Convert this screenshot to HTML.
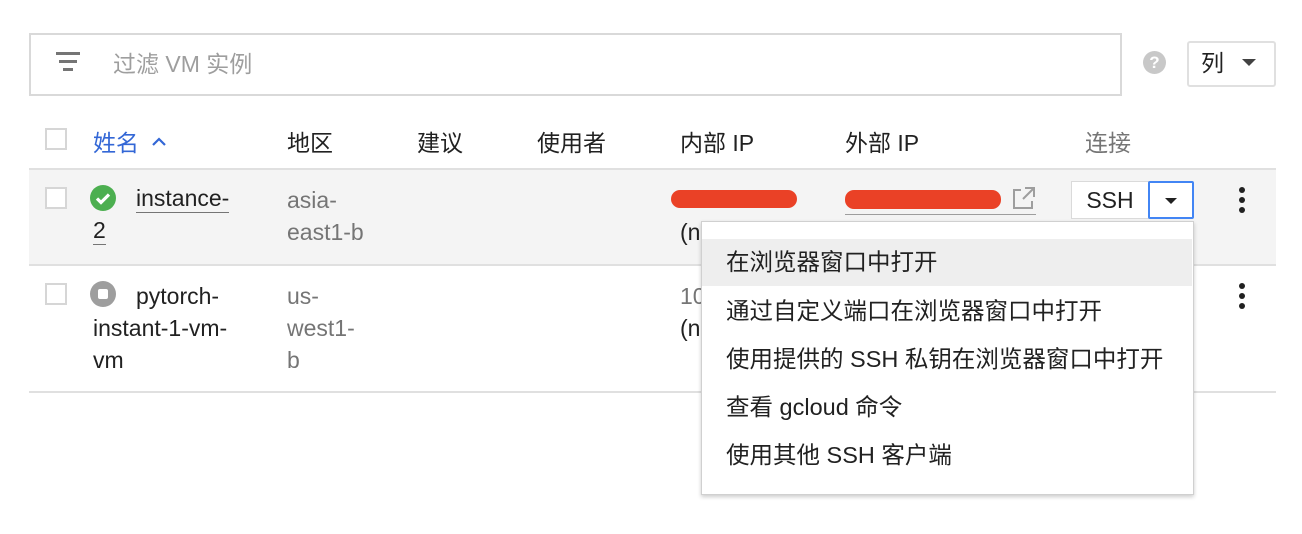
<!DOCTYPE html>
<html><head><meta charset="utf-8"><style>
*{margin:0;padding:0;box-sizing:border-box}
body{width:1302px;height:534px;background:#fff;position:relative;overflow:hidden;font-family:"Liberation Sans","Noto Sans CJK SC",sans-serif;font-size:23px;color:#212121}
.a{position:absolute;white-space:nowrap;line-height:32px}
.cb{position:absolute;width:22px;height:22px;border:2px solid #d6d6d6;background:#fff}
.g{color:#757575}
.line{position:absolute;left:29px;width:1247px;height:2px;background:#e0e0e0}
.mi{position:absolute;left:0;width:490px;height:47px;line-height:47px;padding-left:24px;font-size:23.5px}
</style></head><body>
<div style="position:absolute;left:29px;top:33px;width:1093px;height:63px;border:2px solid #d9d9d9"></div>
<div style="position:absolute;left:56px;top:52px;width:24px;height:3px;background:#757575"></div>
<div style="position:absolute;left:59px;top:60px;width:18px;height:3px;background:#757575"></div>
<div style="position:absolute;left:63px;top:68px;width:10px;height:3px;background:#757575"></div>
<div class="a" style="left:113px;top:48px;color:#9e9e9e">过滤 VM 实例</div>
<div style="position:absolute;left:1143px;top:51px;width:23px;height:23px;border-radius:50%;background:#c8c8c8;color:#fff;font-size:17px;font-weight:bold;text-align:center;line-height:23px">?</div>
<div style="position:absolute;left:1187px;top:41px;width:89px;height:46px;border:2px solid #e0e0e0;border-radius:3px"></div>
<div class="a" style="left:1201px;top:47px">列</div>
<div style="position:absolute;left:1242px;top:59px;border-left:7px solid transparent;border-right:7px solid transparent;border-top:7px solid #424242"></div>

<div class="cb" style="left:45px;top:128px"></div>
<div class="a" style="left:93px;top:127px;color:#3367d6">姓名</div>
<svg style="position:absolute;left:151px;top:136px" width="16" height="12"><path d="M2 9l6-6 6 6" stroke="#3367d6" stroke-width="2.2" fill="none"/></svg>
<div class="a" style="left:287px;top:127px">地区</div>
<div class="a" style="left:417px;top:127px">建议</div>
<div class="a" style="left:537px;top:127px">使用者</div>
<div class="a" style="left:680px;top:127px">内部 IP</div>
<div class="a" style="left:845px;top:127px">外部 IP</div>
<div class="a g" style="left:1085px;top:127px">连接</div>

<div class="line" style="top:168px"></div>
<div style="position:absolute;left:29px;top:170px;width:1247px;height:94px;background:#f4f4f4"></div>
<div class="line" style="top:264px"></div>
<div class="line" style="top:391px"></div>

<div class="cb" style="left:45px;top:187px"></div>
<div style="position:absolute;left:90px;top:185px;width:26px;height:26px;border-radius:50%;background:#4caf50"></div>
<svg style="position:absolute;left:90px;top:185px" width="26" height="26"><path d="M7 13.5l4 4 8-8" stroke="#fff" stroke-width="3.2" fill="none"/></svg>
<div class="a" style="left:136px;top:184px;border-bottom:1px solid #757575;line-height:28px">instance-</div>
<div class="a" style="left:93px;top:216px;border-bottom:1px solid #757575;line-height:28px">2</div>
<div class="a g" style="left:287px;top:184px">asia-</div>
<div class="a g" style="left:287px;top:216px">east1-b</div>
<div style="position:absolute;left:671px;top:190px;width:126px;height:18px;border-radius:9px;background:#ea4126"></div>
<div class="a" style="left:680px;top:216px">(n</div>
<div style="position:absolute;left:845px;top:190px;width:156px;height:19px;border-radius:9px;background:#ea4126"></div>
<div style="position:absolute;left:845px;top:214px;width:191px;height:1px;background:#9e9e9e"></div>
<svg style="position:absolute;left:1011px;top:185px" width="26" height="26"><path d="M10 5H3v18h18v-7M14 3h9v9M23 3L12 14" stroke="#9e9e9e" stroke-width="2" fill="none"/></svg>
<div style="position:absolute;left:1071px;top:181px;width:78px;height:38px;border:1px solid #dadada;background:#fff;text-align:center;line-height:36px">SSH</div>
<div style="position:absolute;left:1148px;top:181px;width:46px;height:38px;border:2px solid #4285f4;background:#fff;border-radius:2px"></div>
<div style="position:absolute;left:1165px;top:198px;border-left:6px solid transparent;border-right:6px solid transparent;border-top:6px solid #212121"></div>
<svg style="position:absolute;left:1236px;top:186px" width="12" height="30"><circle cx="6" cy="4" r="3" fill="#212121"/><circle cx="6" cy="14" r="3" fill="#212121"/><circle cx="6" cy="24" r="3" fill="#212121"/></svg>

<div class="cb" style="left:45px;top:283px"></div>
<div style="position:absolute;left:90px;top:281px;width:26px;height:26px;border-radius:50%;background:#9e9e9e"></div>
<div style="position:absolute;left:98px;top:289px;width:10px;height:10px;border-radius:2px;background:#fff"></div>
<div class="a" style="left:136px;top:280px">pytorch-</div>
<div class="a" style="left:93px;top:312px">instant-1-vm-</div>
<div class="a" style="left:93px;top:344px">vm</div>
<div class="a g" style="left:287px;top:280px">us-</div>
<div class="a g" style="left:287px;top:312px">west1-</div>
<div class="a g" style="left:287px;top:344px">b</div>
<div class="a g" style="left:680px;top:280px">10</div>
<div class="a" style="left:680px;top:312px">(n</div>
<svg style="position:absolute;left:1236px;top:282px" width="12" height="30"><circle cx="6" cy="4" r="3" fill="#212121"/><circle cx="6" cy="14" r="3" fill="#212121"/><circle cx="6" cy="24" r="3" fill="#212121"/></svg>

<div style="position:absolute;left:701px;top:221px;width:493px;height:274px;background:#fff;border:1px solid #d0d0d0;box-shadow:0 2px 4px rgba(0,0,0,.2)">
<div class="mi" style="top:17px;background:#eeeeee">在浏览器窗口中打开</div>
<div class="mi" style="top:66px">通过自定义端口在浏览器窗口中打开</div>
<div class="mi" style="top:114px">使用提供的 SSH 私钥在浏览器窗口中打开</div>
<div class="mi" style="top:162px">查看 gcloud 命令</div>
<div class="mi" style="top:210px">使用其他 SSH 客户端</div>
</div>
</body></html>
